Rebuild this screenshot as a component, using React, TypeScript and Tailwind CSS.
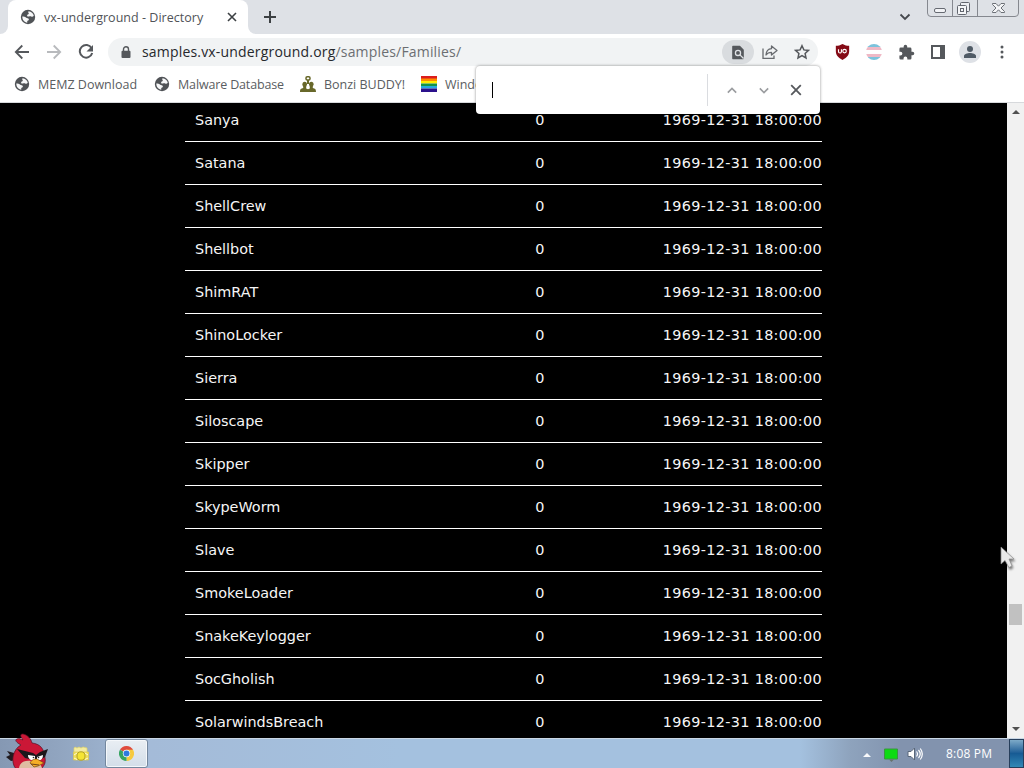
import type { ReactNode } from "react";

const FAMILIES = [
  "Sanya",
  "Satana",
  "ShellCrew",
  "Shellbot",
  "ShimRAT",
  "ShinoLocker",
  "Sierra",
  "Siloscape",
  "Skipper",
  "SkypeWorm",
  "Slave",
  "SmokeLoader",
  "SnakeKeylogger",
  "SocGholish",
  "SolarwindsBreach",
];

function GlobeIcon() {
  return (
    <svg viewBox="0 0 16 16" className="size-4 shrink-0">
      <circle cx="8" cy="8" r="7.200" fill="#505357" />
      <path
        d="M8.600 2.300c2.600.2 4.700 2 5.200 4.500-.9.900-1.700 1.100-2.600.6-.8-.5-1.500-.2-2.300.1-.9.300-1.700 0-1.800-.8-.1-.8.500-1.200 1.300-1.500.8-.3.300-1.500-.3-1.900z"
        fill="#f7f8f9"
      />
      <path
        d="M2.300 7.500c1.200-.3 2.500 0 3.300.8.700.7 1.900.7 2.700 1.200.9.600.7 1.700-.2 2.100-.9.400-1 1-.8 2.100C4.500 13.400 2.300 11 2.300 7.500z"
        fill="#f7f8f9"
      />
    </svg>
  );
}

function BonziIcon() {
  return (
    <svg viewBox="0 0 16 16" className="size-4 shrink-0" fill="#68682a">
      <rect x="6" y="0.800" width="4" height="3.200" rx="1.200" fill="none" stroke="#68682a" strokeWidth="1.500" />
      <path d="M7 4h2v4H7z" />
      <ellipse cx="4.700" cy="8.300" rx="2.300" ry="2.600" />
      <ellipse cx="11.300" cy="8.300" rx="2.300" ry="2.600" />
      <path d="M0 16c0-3 1-3.500 3.200-4v-2h3v2.400L8 13.200l1.800-.8V10h3v2c2.200.5 3.200 1 3.200 4z" />
    </svg>
  );
}

function RainbowIcon() {
  return (
    <svg viewBox="0 0 16 16" className="size-4 shrink-0">
      <path d="M0 0h16v3H0z" fill="#dc1d1d" />
      <path d="M0 2.500h16v3H0z" fill="#ff8c00" />
      <path d="M0 5h16v2.500H0z" fill="#ffed00" />
      <path d="M0 7.500h16V10H0z" fill="#159447" />
      <path d="M0 10h16v2.500H0z" fill="#25a9e0" />
      <path d="M0 12.500h16V16H0z" fill="#2b118c" />
    </svg>
  );
}

function WindowButtons() {
  return (
    <svg width="94" height="18" viewBox="0 0 94 18" fill="none" className="shrink-0">
      <path d="M1.500 0v13q0 3.500 3.500 3.500h84q3.500 0 3.500-3.500V0M26.500 0v16M51.500 0v16" stroke="#85888f" />
      <rect x="8.500" y="8.500" width="11" height="4" rx="1.500" fill="#f2f3f6" stroke="#666a72" />
      <rect x="34.500" y="2.500" width="9" height="9" rx="1" fill="#eceef2" stroke="#62666e" />
      <rect x="31.500" y="5.500" width="9" height="9" rx="1" fill="#f4f5f7" stroke="#62666e" />
      <rect x="34.500" y="8.500" width="3" height="3" stroke="#62666e" />
      <path
        d="M66.500 3.500h3.500l2.500 2.700L75 3.500h3.500v1l-3.500 3.500 3.500 3.500v1H75l-2.500-2.700-2.500 2.700h-3.500v-1L70 8l-3.500-3.500z"
        fill="#f4f5f7"
        stroke="#6c7077"
      />
    </svg>
  );
}

function TabStrip() {
  return (
    <div className="flex h-[34px] bg-[#dee1e6]">
      <div className="h-[34px] w-2 bg-white">
        <div className="h-full rounded-br-lg bg-[#dee1e6]" />
      </div>
      <div className="flex h-[34px] w-60 items-center rounded-t-lg bg-white pl-3">
        <GlobeIcon />
        <span className="ml-2 w-[180px] whitespace-nowrap pt-[2px] text-[12.5px] tracking-[0.030px] text-[#505357]">
          vx-underground - Directory
        </span>
        <svg viewBox="0 0 10 10" className="ml-[3px] size-2.5" stroke="#3c4043" strokeWidth="1.600">
          <path d="M1 1l8 8M9 1L1 9" />
        </svg>
      </div>
      <div className="h-[34px] w-2 bg-white">
        <div className="h-full rounded-bl-lg bg-[#dee1e6]" />
      </div>
      <svg viewBox="0 0 12 12" className="ml-2 mt-[11px] size-3" stroke="#3c4043" strokeWidth="2">
        <path d="M6 0v12M0 6h12" />
      </svg>
      <div className="flex-1" />
      <svg viewBox="0 0 12 8" className="mr-[15px] mt-[13px] h-2 w-3" fill="none" stroke="#45484d" strokeWidth="1.800">
        <path d="M1.500 1.500L6 6l4.500-4.500" />
      </svg>
      <WindowButtons />
      <div className="w-1" />
    </div>
  );
}

function Slot({ children, className = "" }: { children: ReactNode; className?: string }) {
  return <div className={`flex w-8 shrink-0 items-center justify-center ${className}`}>{children}</div>;
}

function Toolbar() {
  return (
    <div className="flex h-9 items-center bg-white pl-[6px]">
      <Slot>
        <svg viewBox="0 0 16 16" className="size-4" fill="none" stroke="#55585c" strokeWidth="1.800">
          <path d="M15 8H2M8.300 1.500L1.800 8l6.500 6.500" />
        </svg>
      </Slot>
      <Slot>
        <svg viewBox="0 0 16 16" className="size-4" fill="none" stroke="#b8babd" strokeWidth="1.800">
          <path d="M1 8h13M7.700 1.500L14.200 8l-6.500 6.500" />
        </svg>
      </Slot>
      <Slot>
        <svg viewBox="0 0 16 16" className="size-4" fill="none" stroke="#55585c" strokeWidth="2">
          <path d="M13.600 4.200A6.300 6.300 0 1 0 14.200 9" />
          <path d="M15 1v6.500H8.500z" fill="#55585c" stroke="none" />
        </svg>
      </Slot>
      <div className="ml-[6px] flex h-7 w-[710px] items-center rounded-full bg-[#f1f3f4] pl-[13px]">
        <svg viewBox="0 0 10 13" className="h-[13px] w-[10px]">
          <path d="M2.500 6V3.300a2.500 2.500 0 0 1 5 0V6" fill="none" stroke="#55585c" strokeWidth="1.400" />
          <rect x="0.500" y="4.700" width="9" height="7.300" rx="1" fill="#55585c" />
        </svg>
        <span className="ml-[11px] flex-1 whitespace-nowrap pb-px text-[14px] tracking-[0.180px] text-[#6b6e72]">
          <span className="text-[#26282c]">samples.vx-underground.org</span>/samples/Families/
        </span>
        <div className="flex h-6 w-8 items-center justify-center rounded-full bg-[#d9dcdf]">
          <svg viewBox="0 0 14 16" className="h-[15px] w-3">
            <path d="M1 1h8l4 4v10H1z" fill="#55585c" stroke="#55585c" strokeWidth="1.500" strokeLinejoin="round" />
            <circle cx="7" cy="8.500" r="3" fill="none" stroke="#dfe2e5" strokeWidth="1.500" />
            <path d="M9 10.500l4.500 4.500" stroke="#dfe2e5" strokeWidth="1.500" />
          </svg>
        </div>
        <Slot>
          <svg viewBox="0 0 16 14" className="h-[14px] w-4" fill="none" stroke="#686b6f" strokeWidth="1.300">
            <path d="M1 3.500v9.800h11V10.500" />
            <path d="M9.500 1L15 5.500 9.500 10V7.300C6.500 7.300 5 8.500 4 10c.2-3 2-6 5.500-6.300z" strokeLinejoin="round" />
          </svg>
        </Slot>
        <Slot>
          <svg viewBox="0 0 16 16" className="size-4" fill="none" stroke="#55585c" strokeWidth="1.500">
            <path d="M8 1.700l1.900 4.200 4.600.5-3.400 3.100.9 4.500-4-2.300L4 14l.9-4.500-3.400-3.100 4.600-.5z" />
          </svg>
        </Slot>
      </div>
      <Slot className="ml-2">
        <svg viewBox="0 0 16 18" className="h-4 w-[15px]">
          <path d="M8 0c2.500 1.500 5 2 7.500 2v6c0 5-3 7.500-7.500 10C3.500 15.500.5 13 .5 8V2C3 2 5.500 1.500 8 0z" fill="#850b16" />
          <path d="M3.500 6v2.500a1.500 1.500 0 0 0 3.300 0V6" fill="none" stroke="#fff" strokeWidth="1.300" />
          <circle cx="10.300" cy="8" r="2" fill="none" stroke="#fff" strokeWidth="1.300" />
        </svg>
      </Slot>
      <Slot>
        <div className="flex size-4 flex-col overflow-hidden rounded-full">
          <div className="flex-1 bg-[#7cc3dc]" />
          <div className="flex-1 bg-[#efb9c6]" />
          <div className="flex-1 bg-white" />
          <div className="flex-1 bg-[#efb9c6]" />
          <div className="flex-1 bg-[#7cc3dc]" />
        </div>
      </Slot>
      <Slot>
        <svg viewBox="0 0 24 24" className="size-[17px]" fill="#55585c">
          <path d="M20.500 11H19V7a2 2 0 0 0-2-2h-4V3.500a2.500 2.500 0 0 0-5 0V5H4a2 2 0 0 0-2 2v3.800h1.500a2.700 2.700 0 0 1 0 5.400H2V20a2 2 0 0 0 2 2h3.800v-1.500a2.700 2.700 0 0 1 5.400 0V22H17a2 2 0 0 0 2-2v-4h1.500a2.500 2.500 0 0 0 0-5z" />
        </svg>
      </Slot>
      <Slot>
        <svg viewBox="0 0 14 14" className="size-[14px]">
          <path d="M0 0h14v14H0z" fill="#55585c" />
          <path d="M2 2h7v10H2z" fill="#fff" />
        </svg>
      </Slot>
      <Slot>
        <div className="flex size-[22px] items-center justify-center rounded-full bg-[#dee1e6]">
          <svg viewBox="0 0 14 14" className="size-[14px]" fill="#505b66">
            <circle cx="7" cy="4" r="3" />
            <path d="M1 13v-2c0-2 3.500-3 6-3s6 1 6 3v2z" />
          </svg>
        </div>
      </Slot>
      <Slot>
        <svg viewBox="0 0 4 14" className="h-[14px] w-1" fill="#55585c">
          <circle cx="2" cy="2" r="1.500" />
          <circle cx="2" cy="7" r="1.500" />
          <circle cx="2" cy="12" r="1.500" />
        </svg>
      </Slot>
    </div>
  );
}

function Bookmark({ icon, label, className }: { icon: ReactNode; label: string; className: string }) {
  return (
    <div className={`flex shrink-0 items-center gap-2 ${className}`}>
      {icon}
      <span className="whitespace-nowrap pt-[2px]">{label}</span>
    </div>
  );
}

function BookmarksBar() {
  return (
    <div className="flex h-[33px] items-center overflow-hidden border-b border-[#d7d9dc] bg-white pb-1 pl-[14px] text-[12.5px] text-[#5a5d61]">
      <Bookmark icon={<GlobeIcon />} label="MEMZ Download" className="w-[140px]" />
      <Bookmark icon={<GlobeIcon />} label="Malware Database" className="w-[146px] tracking-[-0.150px]" />
      <Bookmark icon={<BonziIcon />} label="Bonzi BUDDY!" className="w-[121px]" />
      <Bookmark icon={<RainbowIcon />} label="Windows" className="w-[100px]" />
    </div>
  );
}

function FindBar() {
  return (
    <div className="absolute left-[476px] top-[66px] flex h-12 w-[344px] items-center rounded-b rounded-t-sm bg-white shadow-[0_0_3px_rgba(0,0,0,0.45)]">
      <div className="ml-4 h-4 w-px bg-black" />
      <div className="flex-1" />
      <div className="mr-2 h-8 w-px bg-[#dadce0]" />
      <Slot>
        <svg viewBox="0 0 12 8" className="h-[7px] w-[10px]" fill="none" stroke="#9b9da0" strokeWidth="2">
          <path d="M1 6.500l5-5 5 5" />
        </svg>
      </Slot>
      <Slot>
        <svg viewBox="0 0 12 8" className="h-[7px] w-[10px]" fill="none" stroke="#9b9da0" strokeWidth="2">
          <path d="M1 1.500l5 5 5-5" />
        </svg>
      </Slot>
      <Slot>
        <svg viewBox="0 0 12 12" className="size-3" fill="none" stroke="#55585c" strokeWidth="1.800">
          <path d="M1.200 1.200l9.600 9.600M10.800 1.200l-9.600 9.600" />
        </svg>
      </Slot>
      <div className="w-2" />
    </div>
  );
}

function DirectoryListing() {
  return (
    <div className="flex h-[635px] overflow-hidden bg-black">
      <div className="ml-[185px] mt-[-4px] w-[637px] font-['DejaVu_Sans','Verdana',sans-serif] text-[14.4px] text-[#f6f6f6]">
        {FAMILIES.map((name) => (
          <div key={name} className="flex h-[43px] items-center border-b border-white pt-[2px]">
            <span className="w-[340px] pl-[10px]">{name}</span>
            <span className="w-[30px] text-center">0</span>
            <span className="ml-[108px] whitespace-nowrap tracking-[0.34px]">1969-12-31 18:00:00</span>
          </div>
        ))}
      </div>
      <div className="flex-1" />
      <div className="flex w-[17px] flex-col items-center bg-[#f1f1f1]">
        <svg viewBox="0 0 8 4" className="mt-[7px] h-1 w-2" fill="#505050">
          <path d="M0 4l4-4 4 4z" />
        </svg>
        <div className="mt-[490px] h-[21px] w-[13px] bg-[#c1c1c1]" />
        <div className="flex-1" />
        <svg viewBox="0 0 8 4" className="mb-[7px] h-1 w-2" fill="#505050">
          <path d="M0 0l4 4 4-4z" />
        </svg>
      </div>
    </div>
  );
}

function BirdIcon() {
  return (
    <svg viewBox="0 0 46 38" className="absolute left-[5px] top-[730px] h-[38px] w-[46px]">
      <path d="M9 23L2 21l3 4-4 2 5 4 5-1z" fill="#211b20" />
      <path
        d="M16 15c-4-2-7-5-4-6 2-1 4 0 6 1-3-4-3-6 0-6 5 1 8 5 9 9 8 1 12 5 13 15 1 5-1 8-4 11H11C5 32 8 19 16 15z"
        fill="#cb1736"
        stroke="#551225"
        strokeWidth="0.700"
      />
      <path d="M14 38c1-6 6-8 12-7l9 2 2 5z" fill="#dfbda2" />
      <path d="M12 19l16 4 3 2 4-3 8-3-3 8-7 4-13-3z" fill="#1c171b" />
      <path d="M23 25l7 1v4c-4 1-7-1-7-5zM32 27l6-2c0 4-2 6-6 5z" fill="#fff" />
      <circle cx="28.500" cy="27.500" r="0.800" fill="#222" />
      <circle cx="33.500" cy="27.500" r="0.800" fill="#222" />
      <path d="M25 33c2-4 5-4 7-4l7 4-6 3-4 1z" fill="#f4ad27" stroke="#7b4515" strokeWidth="0.700" />
      <path d="M26 34l8 1" stroke="#704418" />
    </svg>
  );
}

function FolderIcon() {
  return (
    <svg viewBox="0 0 16 16" className="size-4">
      <path d="M1 2l1-1 2 1 2-1 2 1 2-1 4 1v5H1z" fill="#f3eba0" stroke="#dfd267" strokeWidth="0.700" />
      <path d="M.5 6h15v8H.5z" fill="#efdf55" stroke="#dcca50" strokeWidth="0.700" />
      <path d="M1 9l3-2M1 12l3 1.500M15 9l-3-2M15 12l-3 1.500" stroke="#fffad0" />
      <ellipse cx="8" cy="10" rx="4" ry="4.200" fill="#f5e533" stroke="#b2a22a" />
    </svg>
  );
}

function ChromeIcon() {
  return (
    <svg viewBox="0 0 16 16" className="size-[15px]">
      <path d="M8 8L1.070 4A8 8 0 0 1 14.930 4z" fill="#df4b3e" />
      <path d="M8 8L14.930 4A8 8 0 0 1 8 16z" fill="#f6ca3e" />
      <path d="M8 8v8A8 8 0 0 1 1.070 4z" fill="#37a461" />
      <path d="M8 4h6.930L11.500 10 8 8z" fill="#f6ca3e" />
      <circle cx="8" cy="8" r="3.900" fill="#fff" />
      <circle cx="8" cy="8" r="3.200" fill="#2f7ade" />
    </svg>
  );
}

function Taskbar() {
  return (
    <div className="flex h-[30px] items-center overflow-hidden border-t border-[#c9d7e5] bg-[linear-gradient(90deg,#8598b3_0px,#91a5c0_60px,#a4bbd8_150px,#a4c1df_400px,#a4c1df_800px,#8ea3bd_850px,#8293ae_900px,#8293ae_1024px)]">
      <div className="ml-[65px] flex w-8 justify-center">
        <FolderIcon />
      </div>
      <div className="ml-2 flex h-[29px] w-[43px] items-center justify-center rounded-[3px] border border-[#73879e] bg-linear-to-b from-[#e9eef3] to-[#d3dee9] shadow-[inset_0_0_0_1px_#f5f8fb]">
        <ChromeIcon />
      </div>
      <div className="flex-1" />
      <svg viewBox="0 0 8 4" className="mr-[13px] mt-[2px] h-1 w-2" fill="#f8f9fb">
        <path d="M0 4l4-4 4 4z" />
      </svg>
      <svg viewBox="0 0 14 14" className="mr-[9px] mt-[2px] size-[14px]">
        <path d="M.5 1h13v10H.5z" fill="#0ddb12" stroke="#3a963f" />
        <path d="M5 11.500h5L7.500 14z" fill="#68736d" />
      </svg>
      <svg viewBox="0 0 16 14" className="h-[14px] w-4" fill="none" stroke="#fff">
        <path d="M1 4.500h3L7.500 1v12L4 9.500H1z" fill="#fff" stroke="#59677a" />
        <path d="M9.500 4.500q2 2.500 0 5M11.500 3q3.500 4 0 8M13.300 1.500q4 5.500 0 11" strokeWidth="1.200" />
      </svg>
      <span className="ml-[23px] w-[50px] whitespace-nowrap text-[12px] tracking-[0.200px] text-white">8:08 PM</span>
      <div className="ml-[13px] h-full w-[15px] border border-[#263e5b] bg-linear-to-b from-[#7daac8] via-[#175b94] to-[#3388b5]" />
    </div>
  );
}

function Cursor() {
  return (
    <svg viewBox="0 0 18 26" className="absolute left-[1000px] top-[546px] h-[26px] w-[18px] drop-shadow-[1px_2px_1px_rgba(0,0,0,0.5)]">
      <path d="M1 1v17l4-3.500 4 7 3-1.500-3-7h5z" fill="#e9e9e9" stroke="#8b8b8b" strokeWidth="0.700" />
    </svg>
  );
}

export default function App() {
  return (
    <div className="relative h-[768px] w-[1024px] overflow-hidden bg-black font-['Open_Sans','Noto_Sans',sans-serif]">
      <TabStrip />
      <Toolbar />
      <BookmarksBar />
      <DirectoryListing />
      <Taskbar />
      <FindBar />
      <BirdIcon />
      <Cursor />
    </div>
  );
}
